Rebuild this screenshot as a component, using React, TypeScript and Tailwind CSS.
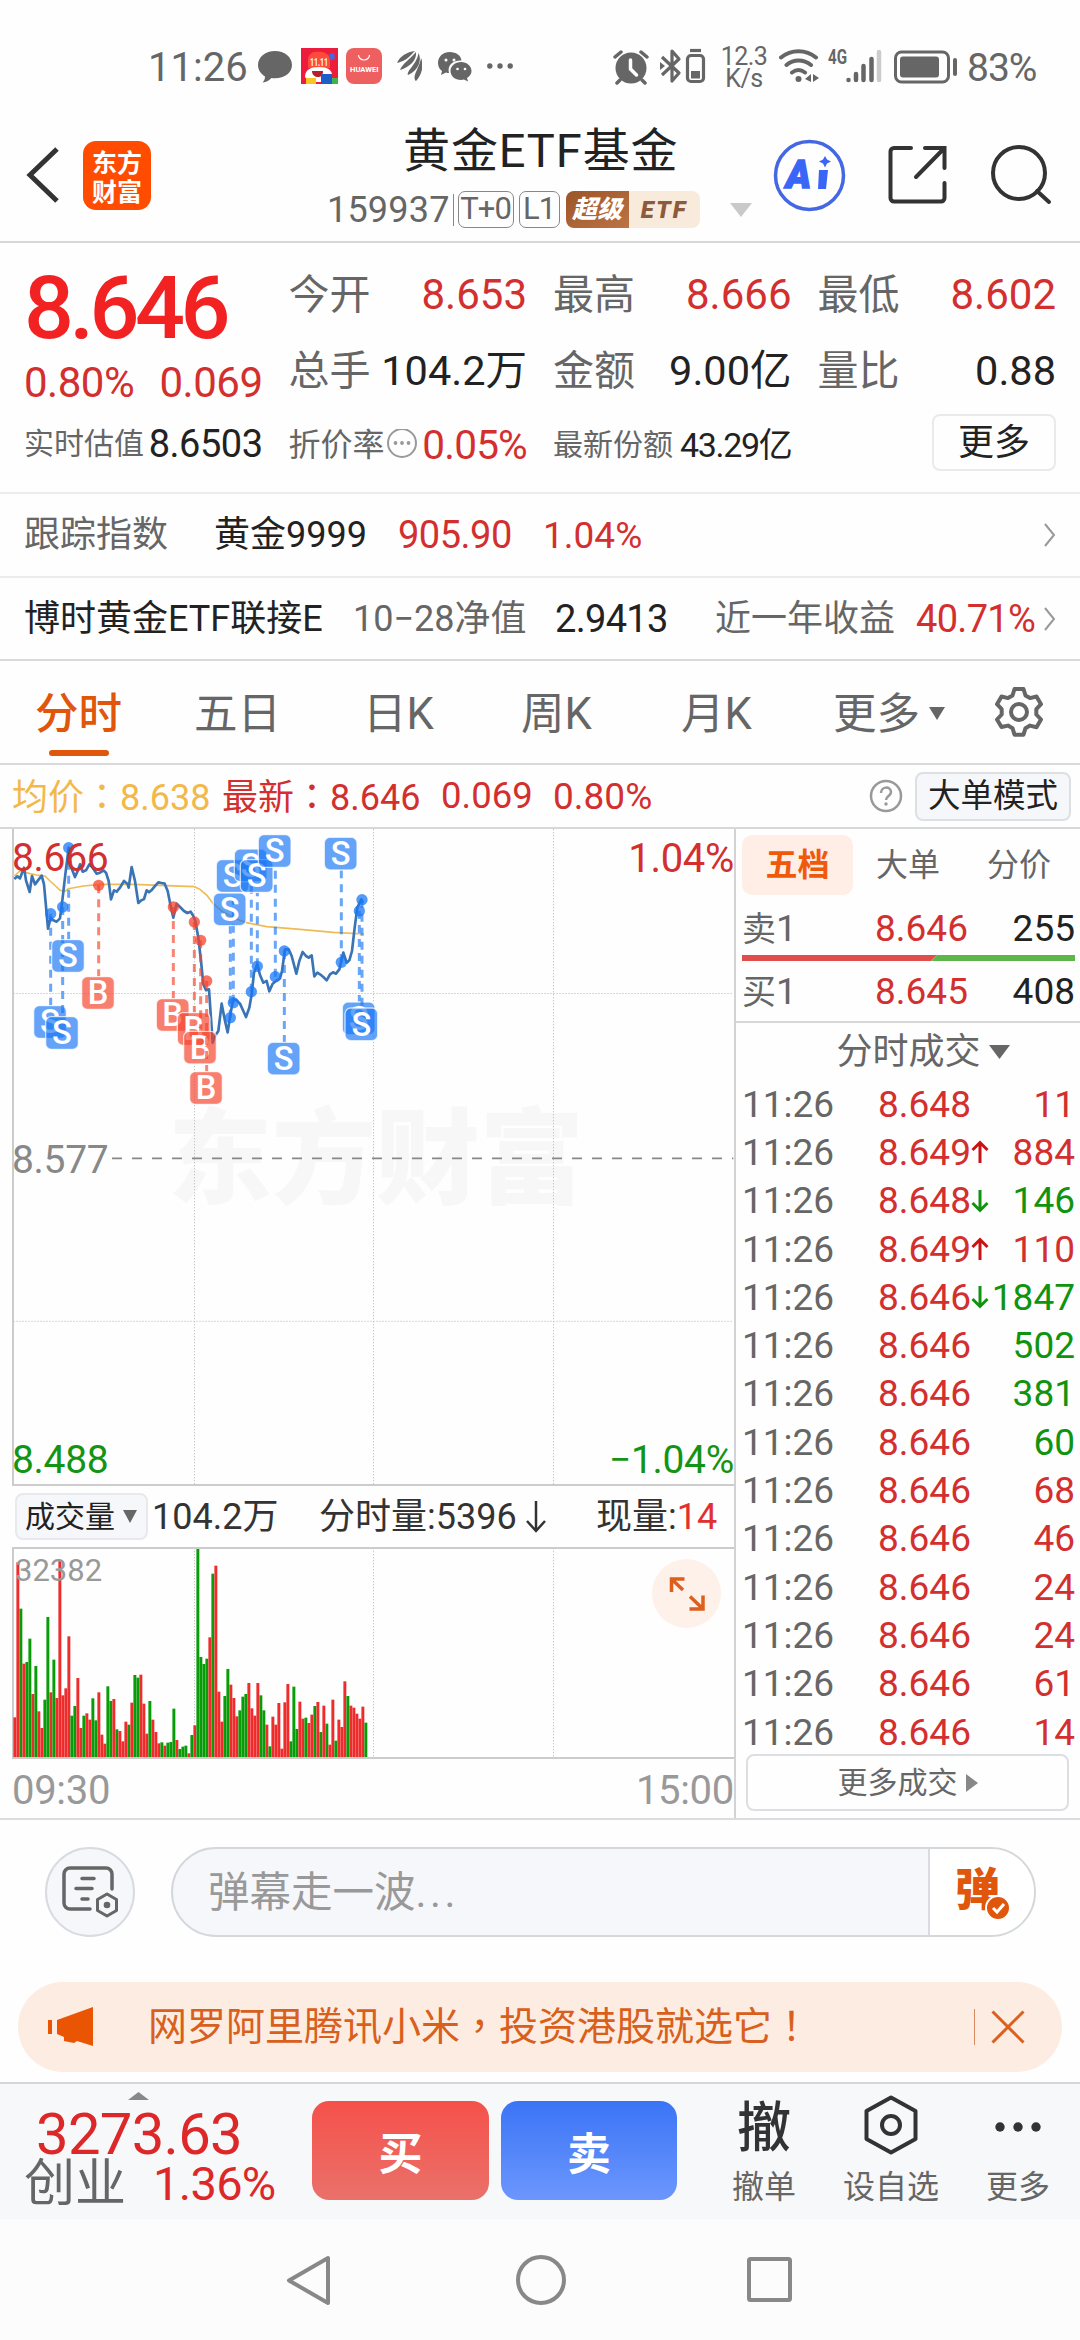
import { ReactNode } from "react"
import clsx from "clsx"

const ticks = [
  { price: "8.648", dir: "", vol: "11", up: true },
  { price: "8.649", dir: "up", vol: "884", up: true },
  { price: "8.648", dir: "down", vol: "146", up: false },
  { price: "8.649", dir: "up", vol: "110", up: true },
  { price: "8.646", dir: "down", vol: "1847", up: false },
  { price: "8.646", dir: "", vol: "502", up: false },
  { price: "8.646", dir: "", vol: "381", up: false },
  { price: "8.646", dir: "", vol: "60", up: false },
  { price: "8.646", dir: "", vol: "68", up: true },
  { price: "8.646", dir: "", vol: "46", up: true },
  { price: "8.646", dir: "", vol: "24", up: true },
  { price: "8.646", dir: "", vol: "24", up: true },
  { price: "8.646", dir: "", vol: "61", up: true },
  { price: "8.646", dir: "", vol: "14", up: true },
]

// one value per minute, negative = falling minute (green)
const volumes = [
  122, 587, -448, 283, -288, -358, 192, -276, 140, 90, -175, -423, 197, -295, 180, 595, 188, 209, 365, -127, -156, 240,
  90, -127, 134, 115, -179, -113, 197, 70, 43, -215, -171, 177, -86, 81, 50, 109, -100, 166, -249, -241, 250, 163, 73,
  -171, 115, 78, 44, -47, 37, -46, -48, -148, 54, -27, -34, -37, 14, -69, 98, -631, -303, -282, -298, 362, -553, 577,
  199, 109, -186, -267, 220, 180, 125, -143, -184, -192, 225, 149, 127, 225, -188, -143, 100, -35, 124, 100, 165, 28,
  167, 222, -50, -214, -87, 169, 118, -121, 105, 130, -156, 168, -78, 157, -103, 40, 175, -52, 115, 93, 230, -186, 157,
  151, 133, 118, 154, -106,
]

const pricePath =
  "43,174 52,166 60,172 72,140 78,178 89,213 96,165 105,190 114,178 125,164 132,190 144,323 152,290 160,298 170,302 180,292 188,230 196,160 206,80 214,140 225,168 233,150 240,130 248,152 258,148 268,130 278,140 290,158 300,155 310,148 318,155 326,180 333,235 342,208 350,212 360,200 372,180 382,188 386,200 395,138 405,180 415,246 424,238 432,234 440,208 447,214 456,206 466,194 475,184 484,186 494,188 503,210 511,250 520,290 530,248 540,258 552,270 562,276 572,272 580,285 586,300 595,350 603,420 610,490 618,508 627,505 638,665 645,645 655,630 665,548 674,595 683,634 692,575 700,535 710,538 720,548 730,570 738,588 748,560 755,520 762,455 772,430 780,462 790,485 800,480 808,511 818,488 828,480 840,472 846,450 855,385 866,385 875,405 889,458 898,420 908,393 918,405 926,410 935,403 943,466 952,455 960,460 970,468 980,478 990,460 999,454 1008,458 1018,445 1030,395 1040,425 1048,418 1056,390 1064,320 1072,260 1084,235 1088,245"

const averagePath =
  "43,165 60,150 90,158 110,162 135,165 150,180 170,198 180,208 195,211 205,203 250,195 300,190 400,190 500,194 583,197 600,205 620,222 640,248 665,270 700,290 740,305 800,317 900,325 1000,334 1092,339"

// [type, x of the dot, y of the dot, y of the badge]
const marks: [string, number, number, number][] = [
  ["S", 152, 278, 603],
  ["S", 188, 258, 636],
  ["S", 206, 80, 405],
  ["B", 296, 193, 516],
  ["B", 520, 258, 582],
  ["B", 583, 303, 624],
  ["B", 602, 358, 680],
  ["B", 620, 480, 801],
  ["S", 700, 545, 165],
  ["S", 691, 590, 265],
  ["S", 754, 512, 133],
  ["S", 772, 436, 165],
  ["S", 826, 467, 90],
  ["S", 1024, 424, 98],
  ["S", 853, 390, 713],
  ["S", 1078, 270, 592],
  ["S", 1086, 236, 610],
]

function Colon() {
  return <span className="font-['Noto_Sans_CJK_TC',sans-serif]">：</span>
}

function StatusBar() {
  return (
    <div className="flex h-[116px] items-start pt-[46px] pl-[148px] text-[#666]">
      <span className="w-[110px] pt-[2px] text-[40px] leading-[40px]">11:26</span>
      <svg className="h-10 w-[34px]" viewBox="0 0 34 40" fill="currentColor">
        <path d="M17 5C7.600 5 0 11 0 19c0 5 3 9 7 11.500 0 3-1 4.500-2.500 6 4-.2 7-2.500 9-4.500 12 1.300 20.500-4.500 20.500-13C34 11 26.400 5 17 5z" />
      </svg>
      <svg className="ml-[9px] h-10 w-[37px]" viewBox="0 0 37 40">
        <rect y="2" width="37" height="36" fill="#ee1c3c" />
        <path d="M7 22V14c0-6 5-9 10-8 5-1 12 2 12 8v8z" fill="#ff4a3c" />
        <path d="M28 8l5-1 1 5-4 3z" fill="#3d6be0" />
        <path d="M4 31c0-7 5-10 14-10s12 3 13 7l-3 8H8z" fill="#fff" />
        <text x="9" y="20" fontSize="11" fontWeight="700" fill="#fff" textLength="18" lengthAdjust="spacingAndGlyphs">
          11.11
        </text>
        <path d="M11 25h11c0 4-2 6-5 6s-6-2-6-6z" fill="#b5202a" />
        <rect x="5" y="32" width="10" height="6" fill="#f8c522" />
        <rect x="20" y="28" width="11" height="10" fill="#1c5fc8" />
        <rect x="31" y="32" width="6" height="6" fill="#3cb54a" />
      </svg>
      <svg className="ml-2 h-10 w-[36px]" viewBox="0 0 36 40">
        <rect y="2" width="36" height="36" rx="8" fill="#ee5f60" />
        <path d="M12.500 9a5.500 5 0 0 0 11 0" fill="none" stroke="#fff" strokeWidth="1.200" />
        <text x="4" y="26" fontSize="7" fontWeight="700" fill="#fff" textLength="28.500" lengthAdjust="spacingAndGlyphs">
          HUAWEI
        </text>
      </svg>
      <svg className="ml-[15px] h-10 w-[25px]" viewBox="0 0 25 40" fill="currentColor">
        <path d="M0 17C3 10 10 6 18 5c-5 5-9 10-18 12z" />
        <path d="M3 24C5 18 13 13 19 6c1 8-6 15-16 18z" />
        <path d="M11 29c-2-4 9-11 10.500-22C25 14 22 24 11 29z" />
        <path d="M19 35c-5-4 4-14 5-23 3 7 1 17-5 23z" />
      </svg>
      <svg className="ml-4 h-10 w-[34px]" viewBox="0 0 34 40" fill="currentColor">
        <path d="M12 6C5 6 0 10.500 0 17c0 4 2 6.500 4 8l-1 4 5-2.500c1 .4 2 .5 3 .5-2-8 4-13 12.500-12.500C23 9.500 18 6 12 6z" />
        <path d="M23 16c-6 0-10.500 4-10.500 9S17 34 23 34c1 0 2-.2 3-.5l4 2-1-3.500c3-2 4.500-4.200 4.500-7C33.500 20 29 16 23 16z" />
        <g fill="#fff">
          <circle cx="8" cy="14" r="1.500" />
          <circle cx="16" cy="14" r="1.500" />
          <circle cx="19.500" cy="23" r="1.300" />
          <circle cx="27" cy="23" r="1.300" />
        </g>
      </svg>
      <svg className="ml-[15px] h-10 w-[26px]" viewBox="0 0 26 40" fill="currentColor">
        <circle cx="2.800" cy="20" r="2.700" />
        <circle cx="13" cy="20" r="2.700" />
        <circle cx="23.200" cy="20" r="2.700" />
      </svg>

      <svg className="ml-[100px] h-10 w-9" viewBox="0 0 36 40" fill="currentColor">
        <circle cx="18" cy="22" r="15.500" />
        <path d="M2 11l6-5M34 11l-6-5M7 34l-3 3M29 34l3 3" stroke="currentColor" strokeWidth="3.500" strokeLinecap="round" />
        <path d="M17.500 14v9l6 6" fill="none" stroke="#fff" strokeWidth="3.500" strokeLinecap="round" />
      </svg>
      <svg className="ml-[11px] h-10 w-[46px]" viewBox="0 0 46 40" fill="none" stroke="currentColor" strokeWidth="3.200">
        <path d="M2 11l17 16-7 8V5l7 8L2 29" strokeLinejoin="round" />
        <path d="M0 16l5 4-5 4z" fill="currentColor" strokeWidth="0" />
        <rect x="27.500" y="9.500" width="16" height="26" rx="3.500" />
        <path d="M30 4.500h11" />
        <rect x="31" y="25" width="9" height="7.500" fill="currentColor" strokeWidth="0" />
      </svg>
      <div className="ml-[14px] flex w-[48px] flex-col items-center text-[25px] leading-[22px] tracking-[-0.500px]">
        <span>12.3</span>
        <span>K/s</span>
      </div>
      <svg className="ml-[11px] h-10 w-[40px]" viewBox="0 0 40 40" fill="none" stroke="currentColor" strokeWidth="4" strokeLinecap="round">
        <path d="M2 11.500c10-8.500 25-8.500 35 0M7.500 19c7-6 17-6 24.500 0M13 26.500c4-3 9-3 13 0" />
        <circle cx="19.500" cy="33" r="3" fill="currentColor" strokeWidth="0" />
        <path d="M26 33l6-5v8zM34 28l6 4-6 4z" fill="currentColor" strokeWidth="0" />
      </svg>
      <svg className="ml-[9px] h-10 w-[54px]" viewBox="0 0 54 40" fill="none" stroke="currentColor" strokeWidth="4.500" strokeLinecap="round">
        <text x="0" y="18" fontSize="20" fontWeight="700" fill="currentColor" strokeWidth="0" textLength="19" lengthAdjust="spacingAndGlyphs">
          4G
        </text>
        <path d="M20.500 34v0M28 28v6M35.500 20v14M43.500 13v21" />
        <path d="M51 6v28" stroke="#ccc" />
      </svg>
      <svg className="ml-3 h-10 w-[64px]" viewBox="0 0 64 40" fill="none" stroke="currentColor" strokeWidth="3">
        <rect x="1.500" y="6" width="53" height="30" rx="6" />
        <rect x="6" y="10.500" width="39" height="21" rx="3" fill="currentColor" strokeWidth="0" />
        <path d="M61 14v14" strokeWidth="4" strokeLinecap="round" />
      </svg>
      <span className="ml-[9px] pt-[2px] text-[39px] leading-[40px] tracking-[-1px]">83%</span>
    </div>
  )
}

function Header() {
  return (
    <header className="flex h-[127px] items-start border-b-2 border-[#d7d7d9]">
      <svg className="mt-[28px] ml-6 h-[62px] w-[37px]" viewBox="0 0 37 62" fill="none" stroke="#333" strokeWidth="5">
        <path d="M33 5L6 31l27 26" />
      </svg>
      <div className="mt-[25px] ml-[22px] flex h-[69px] w-[68px] flex-col items-center justify-center rounded-[13px] bg-[#ff4c00] font-['Noto_Sans_CJK_SC',sans-serif] text-[25px] leading-[29px] font-bold text-white">
        <span>东方</span>
        <span>财富</span>
      </div>
      <div className="ml-[176px] w-[446px]">
        <div className="mt-[10px] ml-[76px] text-[47px] leading-[50px] tracking-[0.900px] whitespace-nowrap text-[#222]">黄金ETF基金</div>
        <div className="mt-[15px] flex h-[37px] items-center text-[#666]">
          <span className="text-[36px] leading-none tracking-[0.200px]">159937</span>
          <span className="ml-[3px] h-[32px] w-px bg-[#888]" />
          <span className="ml-1 flex h-[37px] w-[56px] items-center justify-center rounded-[7px] border border-[#888] text-[31px] tracking-[-1px]">T+0</span>
          <span className="ml-[5px] flex h-[37px] w-[41px] items-center justify-center rounded-[7px] border border-[#888] text-[31px] tracking-[-1px]">L1</span>
          <span className="ml-[6px] flex h-[37px] w-[63px] items-center justify-center rounded-l-lg bg-linear-to-br from-[#9c5527] to-[#bd7344] text-[25px] font-black text-white italic">超级</span>
          <span className="flex h-[37px] w-[71px] items-center justify-center rounded-r-lg bg-[#f8ebdb] text-[24px] font-black tracking-[2px] text-[#8c5a3c] italic">ETF</span>
          <svg className="ml-[30px] h-[14px] w-[22px]" viewBox="0 0 22 14" fill="#c9c9c9">
            <path d="M0 0h22L11 14z" />
          </svg>
        </div>
      </div>
      <svg className="mt-[22px] h-[74px] w-[74px]" viewBox="0 0 74 74">
        <circle cx="36.500" cy="37.500" r="34" fill="none" stroke="#4468e2" strokeWidth="3.500" />
        <text x="13" y="50" fontSize="38" fontWeight="900" fontStyle="italic" fill="#3a66f7" stroke="#3a66f7" strokeWidth="1.500">
          A
        </text>
        <path d="M46 32h9l-2 19h-8zM52 18l2 3.500 4 2-4 2-2 4-2-4-4-2 4-2z" fill="#3a66f7" />
      </svg>
      <svg className="mt-[29px] ml-[41px] h-[60px] w-[60px]" viewBox="0 0 60 60" fill="none" stroke="#333" strokeWidth="4" strokeLinecap="round">
        <path d="M23 3H6a3.500 3.500 0 0 0-3.500 3.500V53A3.500 3.500 0 0 0 6 56.500h47A3.500 3.500 0 0 0 56.500 53V38M37 3h19.500v20M55.500 4L28 32" />
      </svg>
      <svg className="mt-[27px] ml-[42px] h-[64px] w-[64px]" viewBox="0 0 64 64" fill="none" stroke="#333" strokeWidth="4" strokeLinecap="round">
        <circle cx="29" cy="30" r="26" />
        <path d="M47 48l12 11" />
      </svg>
    </header>
  )
}

function Cell({ label, value, red }: { label: string; value: string; red?: boolean }) {
  return (
    <div className="flex h-[76px] items-center justify-between">
      <span className="text-[#666]">{label}</span>
      <span className={red ? "text-[42px] text-[#d32f2f]" : "text-[41.500px] text-[#222]"}>{value}</span>
    </div>
  )
}

function Quote() {
  return (
    <section className="grid h-[251px] grid-cols-4 gap-x-[26px] border-b-2 border-[#ececec] px-6 text-[41px] leading-none whitespace-nowrap">
      <div>
        <div className="mt-[21px] text-[88px] leading-[88px] font-medium tracking-[-4.500px] text-[#f22222]">8.646</div>
        <div className="mt-[10px] flex justify-between text-[42px] tracking-[-0.500px] text-[#d32f2f]">
          <span>0.80%</span>
          <span>0.069</span>
        </div>
        <div className="mt-[19px] flex h-[42px] items-center justify-between">
          <span className="text-[30px] text-[#666]">实时估值</span>
          <span className="text-[38px] tracking-[-0.500px] text-[#222]">8.6503</span>
        </div>
      </div>
      <div className="pt-[14px]">
        <Cell label="今开" value="8.653" red />
        <Cell label="总手" value="104.2万" />
        <div className="mt-[15px] flex h-[42px] items-center">
          <span className="text-[32px] text-[#666]">折价率</span>
          <svg className="ml-[1px] h-8 w-8" viewBox="0 0 32 32" fill="#999">
            <circle cx="16" cy="14" r="14" fill="none" stroke="#999" strokeWidth="2" />
            <circle cx="9.500" cy="14" r="1.900" />
            <circle cx="16" cy="14" r="1.900" />
            <circle cx="22.500" cy="14" r="1.900" />
          </svg>
          <span className="ml-auto text-[40.500px] tracking-[-0.800px] text-[#d32f2f]">0.05%</span>
        </div>
      </div>
      <div className="pt-[14px]">
        <Cell label="最高" value="8.666" red />
        <Cell label="金额" value="9.00亿" />
        <div className="mt-[15px] flex h-[42px] items-center justify-between">
          <span className="text-[30px] text-[#666]">最新份额</span>
          <span className="text-[34px] tracking-[-1.300px] text-[#222]">43.29亿</span>
        </div>
      </div>
      <div className="pt-[14px]">
        <Cell label="最低" value="8.602" red />
        <Cell label="量比" value="0.88" />
        <div className="mt-[5px] ml-auto flex h-[57px] w-[124px] items-center justify-center rounded-lg border-2 border-[#e8eaec] text-[36px] text-[#222]">更多</div>
      </div>
    </section>
  )
}

function ChevronRight() {
  return (
    <svg className="h-6 w-3" viewBox="0 0 12 24" fill="none" stroke="#999" strokeWidth="2">
      <path d="M1 1l9 11-9 11" />
    </svg>
  )
}

function IndexRows() {
  return (
    <section className="text-[36px] leading-none whitespace-nowrap">
      <div className="flex h-[84px] items-center border-b-2 border-[#ececec] pr-6 pl-6">
        <span className="w-[190px] text-[#666]">跟踪指数</span>
        <span className="w-[184px] text-[#222]">黄金9999</span>
        <span className="w-[145px] text-[38px] tracking-[-0.500px] text-[#d32f2f]">905.90</span>
        <span className="flex-1 text-[37px] text-[#d32f2f]">1.04%</span>
        <ChevronRight />
      </div>
      <div className="flex h-[83px] items-center border-b-2 border-[#d9d9db] pr-6 pl-6">
        <span className="w-[329px] text-[#222]">博时黄金ETF联接E</span>
        <span className="w-[202px] text-[#666]">10−28净值</span>
        <span className="w-[160px] text-[38px] tracking-[-0.700px] text-[#222]">2.9413</span>
        <span className="w-[201px] text-[#666]">近一年收益</span>
        <span className="flex-1 text-[38px] tracking-[-0.700px] text-[#d32f2f]">40.71%</span>
        <ChevronRight />
      </div>
    </section>
  )
}

function Tabs() {
  return (
    <nav className="flex h-[104px] items-start border-b-2 border-[#d9d9db] pt-[32px] pl-[35px] text-[43.500px] leading-[43px] whitespace-nowrap text-[#666]">
      <div className="w-[159px]">
        <div className="font-medium text-[#e0570c]">分时</div>
        <div className="mt-[14px] ml-[14px] h-[6px] w-[60px] rounded-full bg-[#e0570c]" />
      </div>
      <span className="w-[169px]">五日</span>
      <span className="w-[158px]">日K</span>
      <span className="w-[160px]">周K</span>
      <span className="w-[152px]">月K</span>
      <span>更多</span>
      <svg className="mt-[14px] ml-[9px] h-[13px] w-[16px]" viewBox="0 0 16 13" fill="#666">
        <path d="M0 0h16L8 13z" />
      </svg>
      <svg className="-mt-[7px] ml-[47px] h-[54px] w-[54px]" viewBox="0 0 54 54" fill="none" stroke="#666" strokeWidth="4" strokeLinejoin="round">
        <path d="M22.500 3h9l2 6.500 4.500 2.600 6.500-1.600 4.500 7.700-4.700 5v5.300l4.700 5-4.500 7.700-6.500-1.600-4.500 2.600-2 6.500h-9l-2-6.500-4.500-2.600L9.500 41 5 33.500l4.700-5v-5.300l-4.700-5 4.500-7.700 6.500 1.600 4.500-2.600z" />
        <circle cx="27" cy="26" r="8" />
      </svg>
    </nav>
  )
}

function InfoBar() {
  return (
    <div className="flex h-[64px] items-center border-b-2 border-[#d7d7d9] pr-[9px] pl-3 text-[36px] leading-none whitespace-nowrap text-[#d32f2f]">
      <span className="w-[210px] text-[#f2b94a]">
        均价
        <Colon />
        8.638
      </span>
      <span className="w-[219px]">
        最新
        <Colon />
        8.646
      </span>
      <span className="w-[112px] text-[36.500px]">0.069</span>
      <span className="text-[37px]">0.80%</span>
      <svg className="ml-auto h-[34px] w-[34px]" viewBox="0 0 34 34" fill="none" stroke="#999" strokeWidth="2.500">
        <circle cx="17" cy="17" r="15" />
        <path d="M12 14c0-7 10-7 10-1 0 4-5 4-5 8" />
        <circle cx="17" cy="25" r="1.700" fill="#999" strokeWidth="0" />
      </svg>
      <span className="ml-3 flex h-[49px] w-[156px] items-center justify-center rounded-lg border-2 border-[#dde0e3] bg-[#f6f7fa] text-[32.500px] text-[#222]">大单模式</span>
    </div>
  )
}

function PriceChart() {
  return (
    <div className="relative ml-3 h-[657px] w-[722px] border-b-2 border-l-2 border-[#ccc] text-[39px] leading-none tracking-[-0.300px]">
      {/* 3 chart units per pixel */}
      <svg className="absolute -left-0.5 top-0 h-[657px] w-[722px]" viewBox="36 24 2166 1971">
        <text x="504" y="1125" fontSize="312" fontWeight="900" fill="#f7f7f7">东方财富</text>
        <path d="M583.500 24V1992M1120.500 24V1992M1660.500 24V1992M40 517.500H2200M40 1501H2200" stroke="#c4c4c4" strokeWidth="3" strokeDasharray="4 5" fill="none" />
        <path d="M336 1012H2200" stroke="#888" strokeWidth="5" strokeDasharray="30 30" />
        <polyline points={averagePath} fill="none" stroke="#efbb55" strokeWidth="5" />
        <polyline points={pricePath} fill="none" stroke="#3a74b5" strokeWidth="8" strokeLinejoin="round" />
        {marks.map(([type, x, y, by], i) => {
          const color = type === "S" ? "#1a78f5" : "#f5432c"
          const end = by > y ? by - 50 : by + 50
          return (
            <g key={i}>
              <path d={`M${x} ${y}V${end}`} stroke={color} strokeWidth="9" strokeDasharray="24 18" opacity="0.65" />
              <circle cx={x} cy={y} r="17" fill={color} opacity="0.75" />
              <rect x={x - 51} y={by - 49} width="98" height="98" rx="17" fill={color} fillOpacity="0.68" stroke="#fff" strokeOpacity="0.7" strokeWidth="4" />
              <text x={x - 2} y={by + 34} fontSize="98" fontWeight="500" fill="#fff" textAnchor="middle" letterSpacing="0">
                {type}
              </text>
            </g>
          )
        })}
      </svg>
      <div className="relative -ml-[2px] flex h-full flex-col justify-between pt-[10px] pb-[4px]">
        <div className="flex justify-between text-[#d32f2f]">
          <span>8.666</span>
          <span className="text-[40px]">1.04%</span>
        </div>
        <div className="text-[#888]">8.577</div>
        <div className="flex justify-between text-[#149414]">
          <span>8.488</span>
          <span>−1.04%</span>
        </div>
      </div>
    </div>
  )
}

function VolumeChart() {
  return (
    <div className="relative ml-3 h-[212px] w-[722px] border-y-2 border-l-2 border-[#ccc]">
      <svg className="absolute -left-0.5 top-0 h-[208px] w-[722px]" viewBox="36 27 2166 624" preserveAspectRatio="none">
        <path d="M583.500 24V654M1120.500 24V654M1660.500 24V654" stroke="#c4c4c4" strokeWidth="3" strokeDasharray="4 5" />
        {volumes.map((v, i) => (
          <rect key={i} x={40 + i * 9} y={654 - Math.abs(v)} width="9" height={Math.abs(v)} fill={v > 0 ? "#ee2a2a" : "#079b07"} />
        ))}
        {volumes.map((v, i) => (
          <path key={i} d={`M${41 + i * 9} 654V${654 - Math.abs(v)}`} stroke="#fff" strokeOpacity="0.180" strokeWidth="2" />
        ))}
      </svg>
      <div className="relative flex justify-between pr-[13px]">
        <span className="pt-[6px] pl-px text-[31px] leading-none text-[#999]">32382</span>
        <svg className="mt-[10px] h-[69px] w-[69px]" viewBox="0 0 69 69" fill="none" stroke="#dc5f1e" strokeWidth="3.500">
          <circle cx="34.500" cy="34.500" r="34.500" fill="#fef1ea" strokeWidth="0" />
          <path d="M32.500 20H19.500v13M20 20.500L31 31M37.500 50H51V36.500M50.500 49.500L38 37.500" />
        </svg>
      </div>
    </div>
  )
}

function ChartPanel() {
  return (
    <div className="w-[734px]">
      <PriceChart />
      <div className="flex h-[61px] items-center pl-[15px] text-[36px] leading-none whitespace-nowrap text-[#333]">
        <span className="flex h-[47px] w-[133px] items-center rounded-lg border-2 border-[#e7e9ec] bg-[#f6f7fa] pl-[8px] text-[30px] text-[#222]">
          成交量
          <svg className="ml-[8px] h-[13px] w-[14px]" viewBox="0 0 14 13" fill="#666">
            <path d="M0 0h14L7 13z" />
          </svg>
        </span>
        <span className="ml-1 w-[167px]">104.2万</span>
        <span className="flex w-[277px] items-center">
          分时量:5396
          <svg className="ml-[9px] h-[32px] w-5" viewBox="0 0 20 32" fill="none" stroke="#333" strokeWidth="2.500">
            <path d="M10 0v30M1 20l9 10 9-10" />
          </svg>
        </span>
        <span>
          现量:<span className="text-[#e03030]">14</span>
        </span>
      </div>
      <VolumeChart />
      <div className="ml-3 flex justify-between pt-[12px] text-[40px] leading-none tracking-[-0.300px] text-[#999]">
        <span>09:30</span>
        <span>15:00</span>
      </div>
    </div>
  )
}

function DepthRow({ label, price, vol }: { label: string; price: string; vol: string }) {
  return (
    <div className="flex h-[60px] items-center text-[37px] leading-none">
      <span className="w-[133px] text-[#666]">
        <span className="text-[34px]">{label}</span>1
      </span>
      <span className="text-[#d32f2f]">{price}</span>
      <span className="ml-auto text-[#222]">{vol}</span>
    </div>
  )
}

function TradePanel() {
  return (
    <div className="flex-1 border-l-2 border-[#d3d3d3] whitespace-nowrap">
      <div className="h-[194px] border-b-2 border-[#d7d7d9] pt-[6px] pr-[7px] pl-[6px]">
        <div className="flex h-[60px] items-center text-[32px] leading-none text-[#666]">
          <span className="flex h-full w-[111px] items-center justify-center rounded-[10px] bg-[#feeee6] font-bold text-[#f0590c]">五档</span>
          <span className="ml-[23px] w-[111px]">大单</span>
          <span>分价</span>
        </div>
        <div className="pt-[3px]">
          <DepthRow label="卖" price="8.646" vol="255" />
        </div>
        <svg className="-mt-[3px] h-[6px] w-[333px]" viewBox="0 0 333 6">
          <path d="M0 0h195l-6 6H0z" fill="#e04d4d" />
          <path d="M195 0h138v6H189z" fill="#5eb64a" />
        </svg>
        <DepthRow label="买" price="8.645" vol="408" />
      </div>
      <div className="flex h-[57px] items-center justify-center pl-[28px] text-[36px] leading-none text-[#666]">
        分时成交
        <svg className="ml-2 h-[14px] w-[21px]" viewBox="0 0 21 14" fill="#666">
          <path d="M0 0h21L10.500 14z" />
        </svg>
      </div>
      {ticks.map((t, i) => (
        <div key={i} className="flex h-[48.300px] items-center pr-[7px] pl-[6px] text-[37px] leading-none">
          <span className="w-[136px] text-[#666]">11:26</span>
          <span className="text-[#d32f2f]">{t.price}</span>
          {t.dir && (
            <svg className={clsx("h-[24px] w-[18px]", t.dir === "down" && "rotate-180")} viewBox="0 0 18 24" fill="none" stroke={t.dir === "up" ? "#cc1111" : "#109410"} strokeWidth="3">
              <path d="M9 23V3M1.500 10L9 2.500l7.500 7.500" />
            </svg>
          )}
          <span className={clsx("ml-auto", t.up ? "text-[#d32f2f]" : "text-[#109410]")}>{t.vol}</span>
        </div>
      ))}
      <div className="-mt-[2px] ml-[10px] flex h-[57px] w-[323px] items-center justify-center rounded-lg border-2 border-[#dcdfe2] text-[30px] leading-none text-[#666]">
        更多成交
        <svg className="ml-2 h-[18px] w-[12px]" viewBox="0 0 12 18" fill="#888">
          <path d="M0 0l12 9-12 9z" />
        </svg>
      </div>
    </div>
  )
}

function DanmuBar() {
  return (
    <div className="flex items-center pt-[27px] pl-[45px]">
      <div className="flex h-[90px] w-[90px] items-center justify-center rounded-full border-2 border-[#d8dbdf] bg-[#f6f7fa]">
        <svg className="h-[52px] w-[56px]" viewBox="0 0 56 52" fill="none" stroke="#666" strokeWidth="3.500" strokeLinecap="round">
          <path d="M28 43H8a6 6 0 0 1-6-6V8a6 6 0 0 1 6-6h36a6 6 0 0 1 6 6v15M20 12.500h12M14 22.500h16M20 33h6" />
          <path d="M45 28l9.500 5.500v11L45 50l-9.500-5.500v-11z" strokeWidth="3" strokeLinejoin="round" />
          <circle cx="45" cy="39" r="3.300" fill="#666" strokeWidth="0" />
        </svg>
      </div>
      <div className="ml-[36px] flex h-[90px] w-[865px] overflow-hidden rounded-full border-2 border-[#d5d8db] bg-[#f6f7fa]">
        <span className="flex w-[757px] items-center border-r-2 border-[#d8dbdf] pt-[2px] pl-[35px] text-[41.500px] text-[#999]">
          弹幕走一波<span className="tracking-[3.500px]">...</span>
        </span>
        <div className="relative flex-1 bg-white pt-[20px] pl-[25px] text-[45px] leading-[44px] font-black text-[#e0570c]">
          弹
          <svg className="absolute top-[46px] left-[55px] h-[26px] w-[26px]" viewBox="0 0 26 26">
            <circle cx="13" cy="13" r="12" fill="#e0570c" stroke="#fff" strokeWidth="2" />
            <path d="M8 13l4 4 7-8" fill="none" stroke="#fff" strokeWidth="3" />
          </svg>
        </div>
      </div>
    </div>
  )
}

function Banner() {
  return (
    <div className="mx-[18px] mt-[45px] flex h-[90px] items-center rounded-full bg-[#fcece2] pl-[30px] text-[39px] leading-none whitespace-nowrap text-[#d95f1c]">
      <svg className="h-[40px] w-[46px]" viewBox="0 0 46 40" fill="#ea5504">
        <path d="M0 13h4v14H0zM9 13L45 0v39l-16-5-3 2-10-2v-4l-7-3z" />
      </svg>
      <span className="ml-[54px] pb-1">
        网罗阿里腾讯小米<span className="font-['Noto_Sans_CJK_TC',sans-serif]">，</span>投资港股就选它
        <span className="font-['Noto_Sans_CJK_TC',sans-serif]">！</span>
      </span>
      <span className="ml-auto h-9 w-[1.500px] bg-[#d98a60]" />
      <svg className="mr-[37px] ml-[16px] h-[34px] w-[34px]" viewBox="0 0 34 34" stroke="#dc5f1e" strokeWidth="3">
        <path d="M1.500 1.500l31 31M32.500 1.500l-31 31" />
      </svg>
    </div>
  )
}

function Action({ label, children }: { label: string; children: ReactNode }) {
  return (
    <div className="flex flex-col items-center">
      <div className="flex h-[62px] items-center text-[54px] leading-none font-medium text-[#333]">{children}</div>
      <span className="mt-[11px] text-[32px] leading-none text-[#666]">{label}</span>
    </div>
  )
}

function BottomBar() {
  return (
    <div className="mt-[10px] flex h-[137px] items-start border-t-2 border-[#d3d6da] bg-[#f7f8fa] whitespace-nowrap">
      <div className="w-[312px] pt-[8px] text-[#dc2828]">
        <svg className="ml-[128px] h-[8px] w-[21px]" viewBox="0 0 21 8" fill="#888">
          <path d="M10.500 0L21 8H0z" />
        </svg>
        <div className="mt-[5px] pl-[36px] text-[58px] leading-[58px] tracking-[-0.700px]">3273.63</div>
        <div className="-mt-[4px] flex items-center pl-6 leading-[50px]">
          <span className="text-[51px] text-[#666]">创业</span>
          <span className="ml-[27px] text-[47px] tracking-[-0.700px]">1.36%</span>
        </div>
      </div>
      <div className="mt-[17px] flex h-[99px] w-[177px] items-center justify-center rounded-[17px] bg-linear-to-b from-[#f5504a] to-[#ea706a] pt-[8px] text-[44px] font-bold text-white">买</div>
      <div className="mt-[17px] ml-3 flex h-[99px] w-[176px] items-center justify-center rounded-[17px] bg-linear-to-b from-[#3a74f6] to-[#6c96fd] pt-[8px] text-[44px] font-bold text-white">卖</div>
      <div className="mt-[14px] ml-[55px] flex gap-[47px]">
        <Action label="撤单">撤</Action>
        <Action label="设自选">
          <svg className="-mt-2 h-[60px] w-[54px]" viewBox="0 0 54 60" fill="none" stroke="#333" strokeWidth="4" strokeLinejoin="round">
            <path d="M27 2.500L51.500 16v28L27 57.500 2.500 44V16z" />
            <circle cx="27" cy="30" r="9" />
          </svg>
        </Action>
        <Action label="更多">
          <svg className="-mt-1 h-3 w-[48px]" viewBox="0 0 48 12" fill="#333">
            <circle cx="6" cy="6" r="4.700" />
            <circle cx="24" cy="6" r="4.700" />
            <circle cx="42" cy="6" r="4.700" />
          </svg>
        </Action>
      </div>
    </div>
  )
}

function NavBar() {
  return (
    <div className="flex flex-1 items-center bg-[#fcfcfc] pl-[284px]">
      <svg className="h-[52px] w-[50px]" viewBox="0 0 50 52" fill="none" stroke="#888" strokeWidth="4" strokeLinejoin="round">
        <path d="M44 4v45L5 26.500z" />
      </svg>
      <svg className="ml-[181px] h-[52px] w-[52px]" viewBox="0 0 52 52" fill="none" stroke="#888" strokeWidth="4">
        <circle cx="26" cy="26" r="23" />
      </svg>
      <svg className="ml-[178px] h-[52px] w-[50px]" viewBox="0 0 50 52" fill="none" stroke="#888" strokeWidth="4">
        <rect x="4" y="5" width="41" height="41" rx="1.500" />
      </svg>
    </div>
  )
}

export default function App() {
  return (
    <div className="flex h-[2340px] w-[1080px] flex-col overflow-hidden bg-[#fefefe] font-['Roboto','Noto_Sans_CJK_SC',sans-serif]">
      <StatusBar />
      <Header />
      <Quote />
      <IndexRows />
      <Tabs />
      <InfoBar />
      <main className="flex h-[991px] border-b-2 border-[#dcdcde]">
        <ChartPanel />
        <TradePanel />
      </main>
      <DanmuBar />
      <Banner />
      <BottomBar />
      <NavBar />
    </div>
  )
}
